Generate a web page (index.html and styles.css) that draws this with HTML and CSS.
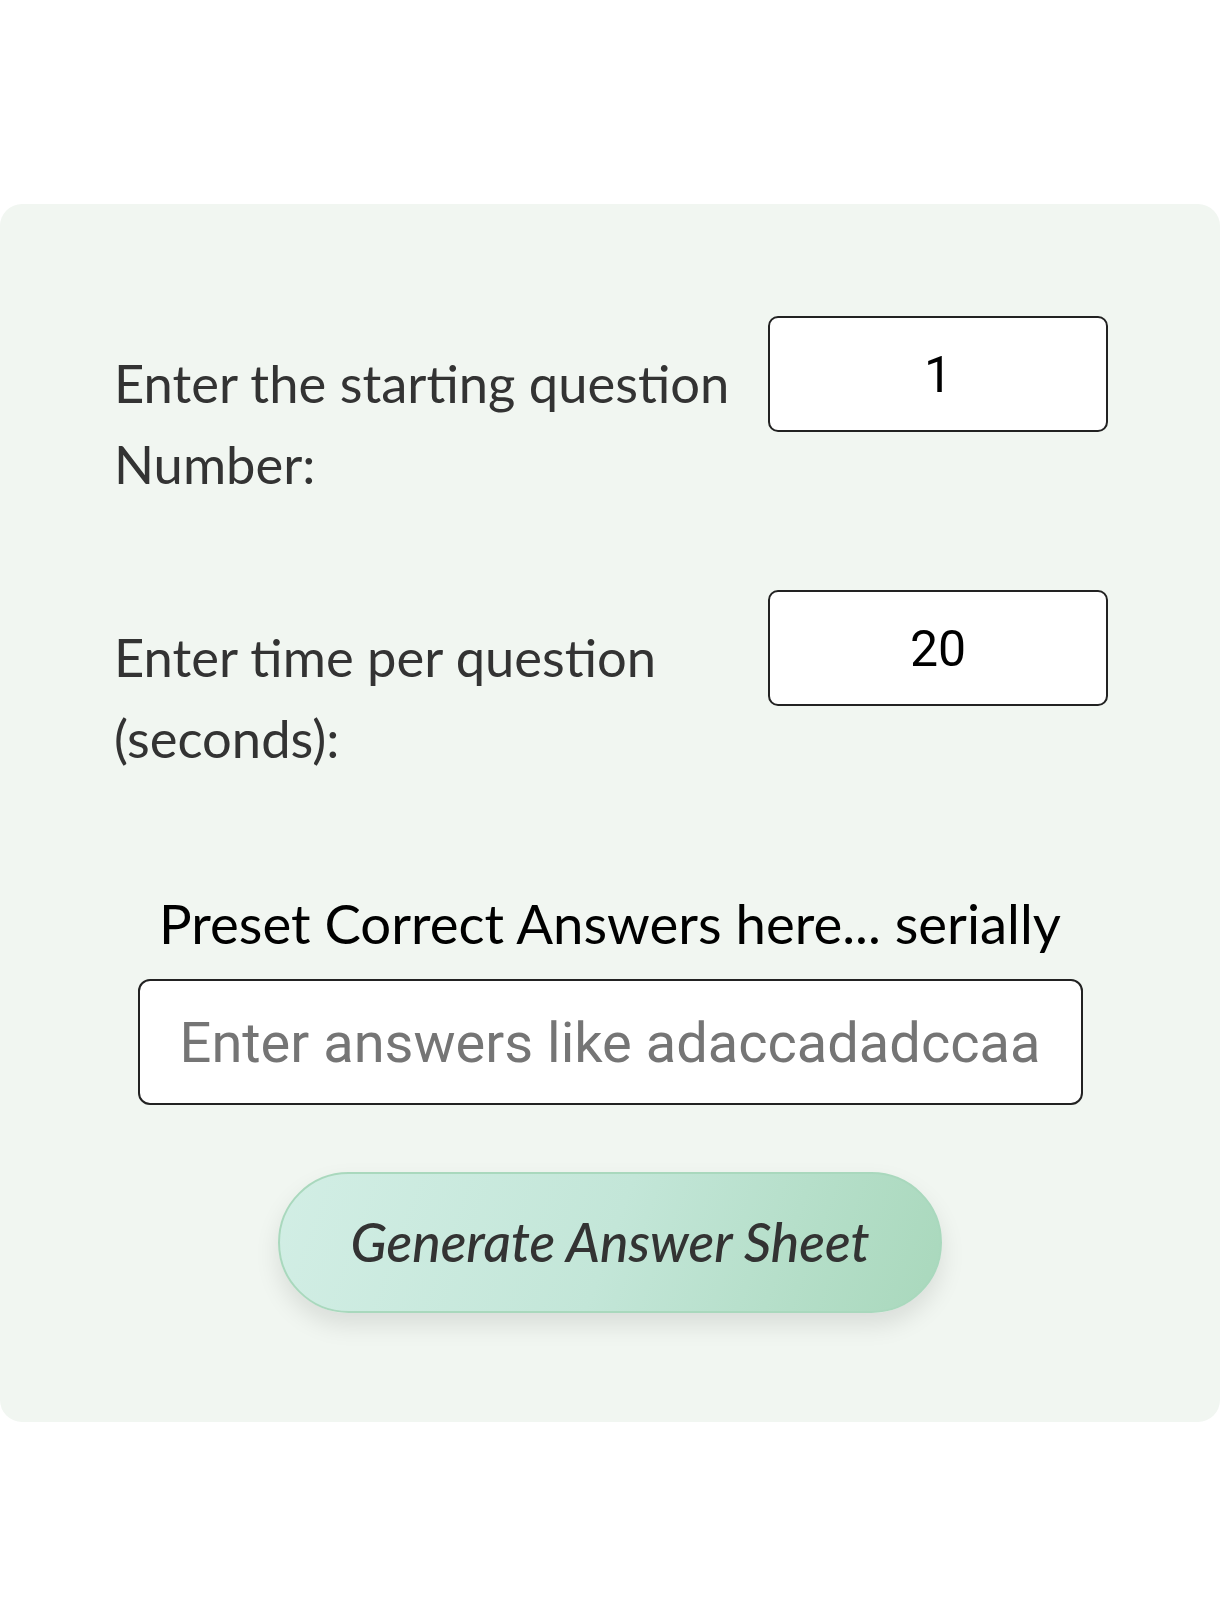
FILE: index.html
```html
<!DOCTYPE html>
<html lang="en">
<head>
<meta charset="utf-8">
<title>Answer Sheet Setup</title>
<link rel="stylesheet" href="styles.css">
</head>
<body>
  <main class="card">
    <div class="row">
      <label class="row-label" for="start">Enter the starting question Number:</label>
      <input class="num-input" id="start" type="text" value="1">
    </div>
    <div class="row">
      <label class="row-label" for="time">Enter time per question (seconds):</label>
      <input class="num-input" id="time" type="text" value="20">
    </div>
    <div class="answers">
      <label class="answers-title" for="answers">Preset Correct Answers here... serially</label>
      <input class="answers-input" id="answers" type="text" placeholder="Enter answers like adaccadadccaa">
    </div>
    <div class="actions">
      <button class="generate" type="button">Generate Answer Sheet</button>
    </div>
  </main>
</body>
</html>
```
FILE: styles.css
```css
* { box-sizing: border-box; }

html, body {
  margin: 0;
  padding: 0;
  background: #ffffff;
}

body {
  font-family: "Lato", "Noto Sans", sans-serif;
  color: #333333;
}

.card {
  margin-top: 204px;
  height: 1218px;
  background: #f1f6f1;
  border-radius: 22px;
  padding: 112px 112px 0 112px;
  display: flex;
  flex-direction: column;
}

.row {
  display: grid;
  grid-template-columns: 1fr 340px;
  column-gap: 16px;
  align-items: start;
  margin-bottom: 86px;
}

.row-label {
  margin-top: 26px;
  font-size: 52.5px;
  line-height: 81px;
  color: #333333;
  padding-left: 2px;
}

.num-input {
  width: 340px;
  height: 116px;
  border: 2px solid #222222;
  border-radius: 10px;
  background: #ffffff;
  font-family: "Roboto", sans-serif;
  font-size: 50px;
  color: #000000;
  text-align: center;
  padding: 2px 10px 0;
  outline: none;
}

.answers {
  display: flex;
  flex-direction: column;
  align-items: center;
  margin-top: 19px;
}

.answers-title {
  font-size: 54.5px;
  line-height: 81px;
  color: #000000;
  margin-bottom: 15px;
}

.answers-input {
  width: 945px;
  height: 126px;
  border: 2px solid #222222;
  border-radius: 12px;
  background: #ffffff;
  font-family: "Roboto", sans-serif;
  font-size: 56px;
  color: #000000;
  text-align: center;
  padding: 2px 8px 0;
  outline: none;
}

.answers-input::placeholder {
  color: #757575;
}

.actions {
  display: flex;
  justify-content: center;
  margin-top: 67px;
}

.generate {
  width: 664px;
  height: 141px;
  border-radius: 71px;
  border: 2px solid #a9d8bd;
  background: linear-gradient(110deg, #d2eee5 0%, #c3e6d8 50%, #a9d8bc 100%);
  box-shadow: 0 12px 24px rgba(0, 0, 0, 0.10);
  font-family: "Lato", sans-serif;
  font-style: italic;
  font-weight: 500;
  font-size: 53.5px;
  color: #333333;
  padding: 0 0 4px;
  cursor: pointer;
}
```
